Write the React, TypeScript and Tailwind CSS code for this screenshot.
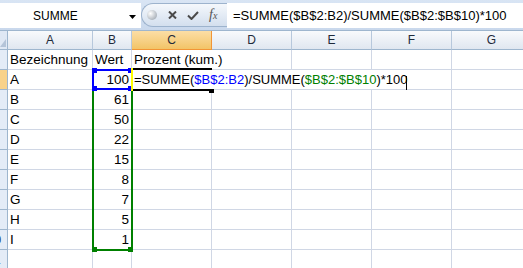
import React from "react";

const colHeads = [
  { name: "A", w: "w-[85px]" },
  { name: "B", w: "w-[39px]" },
  { name: "C", w: "w-[80px]", active: true },
  { name: "D", w: "w-[80px]" },
  { name: "E", w: "w-[80px]" },
  { name: "F", w: "w-[80px]" },
  { name: "G", w: "w-[80px]" },
];

const rows: [string, string][] = [
  ["A", "100"],
  ["B", "61"],
  ["C", "50"],
  ["D", "22"],
  ["E", "15"],
  ["F", "8"],
  ["G", "7"],
  ["H", "5"],
  ["I", "1"],
];

const cell =
  "h-[20px] border-r border-b border-[#d0d7e5] text-[13.5px] leading-[20px] px-[2px] whitespace-nowrap text-black";

const RowHead = ({ n, active }: { n: number; active?: boolean }) => (
  <div
    className={
      "h-[20px] flex justify-end overflow-hidden border-r border-b border-[#9eb6ce] " +
      (active ? "bg-[#f8d28a]" : "bg-[#e4ecf7]")
    }
  >
    <span className="w-[25px] shrink-0 text-center text-[12px] leading-[20px] text-[#1e395b]">{n}</span>
  </div>
);

const Blank = () => <div className={cell} />;

export default function App() {
  return (
    <div className="relative w-[523px] h-[268px] overflow-hidden bg-white font-['Liberation_Sans',Arial,sans-serif]">
      {/* Formula bar */}
      <div className="h-[31px] flex items-start pt-[3px] bg-gradient-to-b from-[#d9e5f4] to-[#c9d8ec] border-b border-[#9eb6ce]">
        <div className="relative h-[25px] w-[141px] bg-white flex items-center">
          <span className="pl-[33px] text-[12px] text-black">SUMME</span>
          <svg className="absolute left-[129px] top-[12px]" width="7" height="4" viewBox="0 0 7 4">
            <path d="M0 0 H7 L3.5 4 Z" fill="#000" />
          </svg>
        </div>
        <div className="h-[24px] w-[86px] flex items-center rounded-l-full border border-r-0 border-[#9db3cd] bg-gradient-to-b from-[#f5f8fc] to-[#d3dfee]">
          <span className="ml-[5px] w-[10px] h-[10px] rounded-full bg-[radial-gradient(circle_at_35%_35%,#ffffff,#8f99a4)]" />
          <svg className="ml-[11px]" width="9" height="8" viewBox="0 0 9 8">
            <path d="M1 0.5 L8 7.5 M8 0.5 L1 7.5" stroke="#4a4a4a" strokeWidth="2" />
          </svg>
          <svg className="ml-[10px]" width="12" height="9" viewBox="0 0 12 9">
            <path d="M1 4.5 L4.5 8 L11 1" stroke="#4a4a4a" strokeWidth="2" fill="none" />
          </svg>
          <span className="ml-[10px] font-['Liberation_Serif',serif] italic text-[14px] leading-none text-[#555]">
            f<span className="text-[10px]">x</span>
          </span>
        </div>
        <div className="h-[25px] flex-1 bg-white pl-[6px] text-[13px] leading-[25px] text-black whitespace-nowrap">
          =SUMME($B$2:B2)/SUMME($B$2:$B$10)*100
        </div>
      </div>

      {/* Sheet grid */}
      <div className="grid grid-cols-[8px_85px_39px_80px_80px_80px_80px_80px] w-[532px]">
        {/* Column headers */}
        <div className="relative h-[19px] border-r border-b border-[#9eb6ce] bg-[#dfe8f4]">
          <svg className="absolute right-[1px] bottom-[2px]" width="6" height="8" viewBox="0 0 6 8">
            <path d="M6 0 V8 H0 Z" fill="#b4c4d8" />
          </svg>
        </div>
        {colHeads.map((c) => (
          <div
            key={c.name}
            className={
              "h-[19px] border-r border-b text-center text-[12px] leading-[18px] text-[#1e2a3a] " +
              (c.active
                ? "bg-gradient-to-b from-[#fbdea5] to-[#f2c466] border-[#f29536]"
                : "bg-gradient-to-b from-[#f8fafc] to-[#e0e7f0] border-r-[#b7c8dc] border-b-[#9eb6ce]")
            }
          >
            {c.name}
          </div>
        ))}

        {/* Row 1 */}
        <RowHead n={1} />
        <div className={cell}>Bezeichnung</div>
        <div className={cell}>Wert</div>
        <div className={cell + " col-span-2"}>Prozent (kum.)</div>
        <Blank />
        <Blank />
        <Blank />

        {rows.map(([label, value], i) => (
          <React.Fragment key={label}>
            <RowHead n={i + 2} active={i === 0} />
            <div className={cell}>{label}</div>
            <div className={cell + " text-right"}>{value}</div>
            {i === 0 ? (
              <>
                <div className={cell + " col-span-4 text-[13px]"}>
                  =SUMME(<span className="text-[#0000ff]">$B$2:B2</span>)/SUMME(
                  <span className="text-[#008000]">$B$2:$B$10</span>)*100
                </div>
                <Blank />
              </>
            ) : (
              <>
                <Blank />
                <Blank />
                <Blank />
                <Blank />
                <Blank />
              </>
            )}
          </React.Fragment>
        ))}

        <RowHead n={11} />
        <Blank />
        <Blank />
        <Blank />
        <Blank />
        <Blank />
        <Blank />
        <Blank />
      </div>

      {/* Range highlights over the sheet */}
      <div className="absolute left-[92px] top-[69px] w-[41px] h-[182px] border-2 border-[#008000]" />
      <div className="absolute left-[92px] top-[247px] w-[5px] h-[5px] bg-[#008000]" />
      <div className="absolute left-[128px] top-[247px] w-[5px] h-[5px] bg-[#008000]" />

      <div className="absolute left-[92px] top-[69px] w-[41px] h-[21px] border-2 border-[#0000ff]" />
      <div className="absolute left-[92px] top-[68px] w-[5px] h-[5px] bg-[#0000ff]" />
      <div className="absolute left-[92px] top-[86px] w-[5px] h-[5px] bg-[#0000ff]" />
      <div className="absolute left-[128px] top-[68px] w-[3px] h-[5px] bg-[#0000ff]" />
      <div className="absolute left-[128px] top-[86px] w-[3px] h-[5px] bg-[#0000ff]" />
      <div className="absolute left-[131px] top-[68px] w-[2px] h-[23px] bg-[#ffff00]" />

      {/* Active cell C2 */}
      <div className="absolute left-[133px] top-[68px] w-[79px] h-[2px] bg-black" />
      <div className="absolute left-[133px] top-[89px] w-[76px] h-[2px] bg-black" />
      <div className="absolute left-[209px] top-[89px] w-[5px] h-[4px] bg-black" />
      <div className="absolute left-[406px] top-[76px] w-[1px] h-[14px] bg-black" />
    </div>
  );
}
